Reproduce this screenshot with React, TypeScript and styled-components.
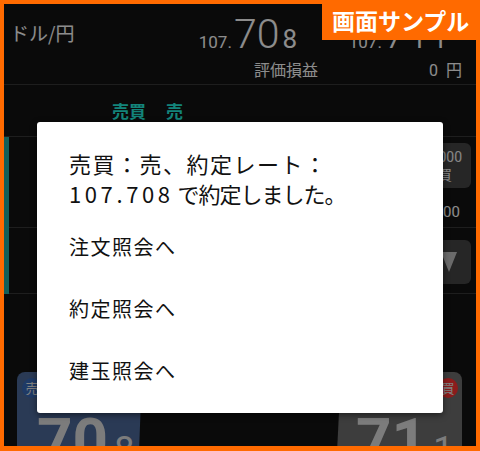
import styled, { createGlobalStyle } from "styled-components";
import { FC } from "react";

const GlobalStyle = createGlobalStyle`
  html, body {
    margin: 0;
    padding: 0;
    background: #000;
  }
  body {
    font-family: Roboto, "Noto Sans CJK JP", sans-serif;
  }
`;

interface PriceProps {
  head: string;
  big: string;
  tail: string;
}

const Price: FC<PriceProps> = ({ head, big, tail }) => (
  <PriceBox>
    <PriceHead>{head}</PriceHead>
    <PriceBig>{big}</PriceBig>
    <PriceTail>{tail}</PriceTail>
  </PriceBox>
);

interface RateCardProps {
  side: "sell" | "buy";
  badge: string;
  big: string;
  tail: string;
}

const RateCard: FC<RateCardProps> = ({ side, badge, big, tail }) => (
  <Card $side={side}>
    <Badge $side={side}>{badge}</Badge>
    <CardRate>
      <CardBig>{big}</CardBig>
      <CardTail>{tail}</CardTail>
    </CardRate>
  </Card>
);

const menu = ["注文照会へ", "約定照会へ", "建玉照会へ"];

export default function App() {
  return (
    <>
      <GlobalStyle />
      <Frame>
        <Screen>
          <Header>
            <HeaderTop>
              <Pair>ドル/円</Pair>
              <Price head="107." big="70" tail="8" />
              <Price head="107." big="71" tail="1" />
            </HeaderTop>
            <HeaderBottom>
              <ProfitLabel>評価損益</ProfitLabel>
              <ProfitValue>0&nbsp;&nbsp;円</ProfitValue>
            </HeaderBottom>
          </Header>
          <TabRow>
            <Tab>売買</Tab>
            <Tab>売</Tab>
          </TabRow>
          <OrderGroup>
            <OrderRow $height={91}>
              <RowSide>
                <SideButton $width={52} $height={45} $top={6}>
                  <span>1,000</span>
                  <span>買</span>
                </SideButton>
                <SideValue>1,000</SideValue>
              </RowSide>
            </OrderRow>
            <OrderRow $height={66}>
              <RowSide>
                <SideButton $width={44} $height={44} $top={12}>
                  <Arrow />
                </SideButton>
              </RowSide>
            </OrderRow>
          </OrderGroup>
          <Spacer />
          <CardsRow>
            <RateCard side="sell" badge="売" big="70" tail="8" />
            <RateCard side="buy" badge="買" big="71" tail="1" />
          </CardsRow>
        </Screen>
        <Overlay>
          <Dialog>
            <Message>
              売買：売、約定レート：
              <br />
              <Rate>107.708</Rate>
              <Tight> で約定しました。</Tight>
            </Message>
            <Menu>
              {menu.map((item) => (
                <MenuItem key={item}>{item}</MenuItem>
              ))}
            </Menu>
          </Dialog>
        </Overlay>
        <SampleLabel>画面サンプル</SampleLabel>
      </Frame>
    </>
  );
}

const Frame = styled.div`
  position: relative;
  width: 480px;
  height: 451px;
  box-sizing: border-box;
  border: 4px solid #ff6a00;
  border-bottom-width: 5px;
  background: #121212;
  overflow: hidden;
`;

const Screen = styled.div`
  display: flex;
  flex-direction: column;
  height: 100%;
  color: #eaeaea;

  & > * {
    flex-shrink: 0;
  }
`;

const Header = styled.div`
  display: flex;
  flex-direction: column;
  height: 81px;
  box-sizing: border-box;
  border-bottom: 1px solid #333;
`;

const HeaderTop = styled.div`
  display: grid;
  grid-template-columns: auto 1fr 150px;
  align-items: start;
  height: 56px;
  padding-right: 29px;
`;

const Pair = styled.div`
  padding: 19px 0 0 6px;
  font-family: "Noto Sans CJK JP", sans-serif;
  font-size: 19px;
  line-height: 1;
`;

const PriceBox = styled.div`
  display: flex;
  align-items: baseline;
  justify-content: flex-end;
  margin-top: 10px;
  line-height: 1;
`;

const PriceHead = styled.span`
  font-size: 17px;
`;

const PriceBig = styled.span`
  font-size: 41px;
  font-weight: 300;
  margin-left: 2px;
`;

const PriceTail = styled.span`
  font-size: 26px;
  margin-left: 3px;
`;

const HeaderBottom = styled.div`
  display: grid;
  grid-template-columns: 1fr 144px;
  padding-right: 14px;
  font-family: Roboto, "Noto Sans CJK JP", sans-serif;
  font-size: 16px;
  line-height: 1;
  padding-top: 3px;
`;

const ProfitLabel = styled.div`
  text-align: right;
`;

const ProfitValue = styled.div`
  text-align: right;
`;

const TabRow = styled.div`
  display: flex;
  gap: 20px;
  height: 52px;
  box-sizing: border-box;
  padding: 17px 0 0 108px;
  border-bottom: 1px solid #333;
`;

const Tab = styled.div`
  font-family: "Noto Sans CJK JP", sans-serif;
  font-size: 17px;
  font-weight: 700;
  line-height: 1;
  color: #20dccb;
`;

const OrderGroup = styled.div`
  display: flex;
  flex-direction: column;
  border-left: 5px solid #209e96;
`;

const OrderRow = styled.div<{ $height: number }>`
  display: flex;
  justify-content: flex-end;
  height: ${(p) => p.$height}px;
  box-sizing: border-box;
  border-bottom: 1px solid #333;
  padding-right: 5px;
`;

const RowSide = styled.div`
  display: flex;
  flex-direction: column;
  align-items: flex-end;
`;

const SideButton = styled.div<{ $width: number; $height: number; $top: number }>`
  display: flex;
  flex-direction: column;
  align-items: center;
  justify-content: center;
  width: ${(p) => p.$width}px;
  height: ${(p) => p.$height}px;
  margin-top: ${(p) => p.$top}px;
  border-radius: 6px;
  background: #404040;
  font-family: Roboto, "Noto Sans CJK JP", sans-serif;
  font-size: 14px;
  line-height: 18px;
  color: #e0e0e0;
`;

const SideValue = styled.div`
  margin-top: 17px;
  padding-right: 11px;
  font-size: 15px;
  line-height: 1;
`;

const Arrow = styled.div`
  width: 0;
  height: 0;
  border-left: 8px solid transparent;
  border-right: 8px solid transparent;
  border-top: 20px solid #b3b3b3;
`;

const Spacer = styled.div`
  height: 78px;
`;

const CardsRow = styled.div`
  display: flex;
  justify-content: space-between;
  padding: 0 14px 0 13px;
`;

const Card = styled.div<{ $side: "sell" | "buy" }>`
  position: relative;
  width: ${(p) => (p.$side === "sell" ? 125 : 126)}px;
  height: 100px;
  background: ${(p) => (p.$side === "sell" ? "#46618e" : "#666666")};
  border-radius: ${(p) => (p.$side === "sell" ? "8px 0 0 0" : "0 8px 0 0")};
  clip-path: ${(p) =>
    p.$side === "sell"
      ? "polygon(0 0, 100% 0, 97% 100%, 0 100%)"
      : "polygon(4% 0, 100% 0, 100% 100%, 0 100%)"};
`;

const Badge = styled.div<{ $side: "sell" | "buy" }>`
  position: absolute;
  top: 6px;
  ${(p) => (p.$side === "sell" ? "left: 5px;" : "right: 4px;")}
  width: 20px;
  height: 20px;
  border-radius: 50%;
  background: ${(p) => (p.$side === "sell" ? "#3461aa" : "#e92f2f")};
  font-family: "Noto Sans CJK JP", sans-serif;
  font-size: 13px;
  line-height: 20px;
  text-align: center;
  color: #d8d8d8;
`;

const CardRate = styled.div`
  display: flex;
  align-items: baseline;
  padding: 38px 0 0 20px;
  line-height: 1;
  color: #cfcfcf;
`;

const CardBig = styled.span`
  font-size: 62px;
  font-weight: 700;
`;

const CardTail = styled.span`
  font-size: 36px;
  margin-left: 6px;
`;

const Overlay = styled.div`
  position: absolute;
  inset: 0;
  display: flex;
  justify-content: center;
  align-items: flex-start;
  padding-top: 118px;
  background: rgba(0, 0, 0, 0.4);
`;

const Dialog = styled.div`
  display: flex;
  flex-direction: column;
  width: 406px;
  height: 291px;
  box-sizing: border-box;
  padding: 26px 0 0 32px;
  background: #fff;
  border-radius: 3px;
  box-shadow: 0 2px 6px rgba(0, 0, 0, 0.5);
  font-family: "Noto Sans CJK JP", sans-serif;
  color: #111;
`;

const Message = styled.div`
  font-size: 22px;
  line-height: 30px;
  letter-spacing: 1.5px;
`;

const Rate = styled.span`
  letter-spacing: 3.6px;
`;

const Tight = styled.span`
  letter-spacing: -1px;
`;

const Menu = styled.div`
  display: flex;
  flex-direction: column;
  margin-top: 8px;
`;

const MenuItem = styled.div`
  height: 62px;
  font-size: 20px;
  line-height: 62px;
  letter-spacing: 1.5px;
`;

const SampleLabel = styled.div`
  position: absolute;
  top: -4px;
  right: -4px;
  width: 158px;
  height: 40px;
  box-sizing: border-box;
  padding-left: 10px;
  background: #ff6a00;
  font-family: "Noto Sans CJK JP", sans-serif;
  font-size: 23px;
  font-weight: 700;
  line-height: 40px;
  color: #fff;
`;
